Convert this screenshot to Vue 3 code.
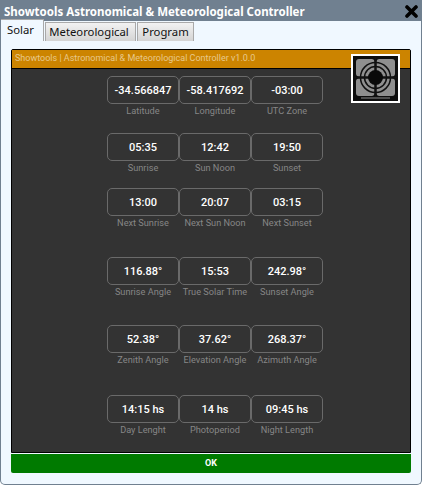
<script setup>
const rows = [
  { gap: 0, cells: [['-34.566847', 'Latitude'], ['-58.417692', 'Longitude'], ['-03:00', 'UTC Zone']] },
  { gap: 13, cells: [['05:35', 'Sunrise'], ['12:42', 'Sun Noon'], ['19:50', 'Sunset']] },
  { gap: 11, cells: [['13:00', 'Next Sunrise'], ['20:07', 'Next Sun Noon'], ['03:15', 'Next Sunset']] },
  { gap: 25, cells: [['116.88°', 'Sunrise Angle'], ['15:53', 'True Solar Time'], ['242.98°', 'Sunset Angle']] },
  { gap: 24, cells: [['52.38°', 'Zenith Angle'], ['37.62°', 'Elevation Angle'], ['268.37°', 'Azimuth Angle']] },
  { gap: 26, cells: [['14:15 hs', 'Day Lenght'], ['14 hs', 'Photoperiod'], ['09:45 hs', 'Night Length']] },
]
</script>

<template>
  <div class="window">
    <div class="titlebar">
      <span class="title">Showtools Astronomical &amp; Meteorological Controller</span>
      <svg class="close" width="13" height="13" viewBox="0 0 13 13">
        <path d="M2 2 L11 11 M11 2 L2 11" stroke="#000" stroke-width="3.6" stroke-linecap="round" />
      </svg>
    </div>
    <div class="tabs">
      <div class="tab active">Solar</div>
      <div class="tab meteo">Meteorological</div>
      <div class="tab program">Program</div>
    </div>
    <div class="body">
      <div class="panel">
        <div class="header">Showtools | Astronomical &amp; Meteorological Controller v1.0.0</div>
        <div class="logo">
          <svg width="45" height="45" viewBox="0 0 45 45">
            <rect width="45" height="45" fill="#0d0d0d" />
            <rect x="3" y="3" width="18.5" height="17.5" rx="3" fill="#8f8f8f" />
            <rect x="23.5" y="3" width="18.5" height="17.5" rx="3" fill="#8f8f8f" />
            <rect x="3" y="22.5" width="18.5" height="17.5" rx="3" fill="#8f8f8f" />
            <rect x="23.5" y="22.5" width="18.5" height="17.5" rx="3" fill="#8f8f8f" />
            <g fill="none" stroke="#111" stroke-width="1.5">
              <circle cx="22.5" cy="21.5" r="15" />
              <circle cx="22.5" cy="21.5" r="11" />
            </g>
            <path d="M22.5 1 V41 M1 21.5 H44" stroke="#111" stroke-width="2" />
            <circle cx="22.5" cy="21.5" r="7.5" fill="#0a0a0a" />
            <rect x="8" y="41.4" width="29" height="1.2" fill="#777" />
          </svg>
        </div>
        <div class="grid">
          <div v-for="(row, i) in rows" :key="i" class="row" :style="{ marginTop: row.gap + 'px' }">
            <div v-for="cell in row.cells" :key="cell[1]" class="cell">
              <div class="box">{{ cell[0] }}</div>
              <div class="label">{{ cell[1] }}</div>
            </div>
          </div>
        </div>
      </div>
      <div class="ok">OK</div>
    </div>
  </div>
</template>

<style>
html, body { margin: 0; background: #fff; }
</style>

<style scoped>
.window {
  width: 422px;
  height: 485px;
  box-sizing: border-box;
  background: #f0f8ff;
  border: 1px solid #708090;
  border-top: none;
  border-radius: 0 0 5px 5px;
  overflow: hidden;
  font-family: "Noto Sans", "Open Sans", sans-serif;
}
.titlebar {
  height: 21px;
  margin: 0 -1px;
  background: #708090;
  display: flex;
  align-items: center;
  justify-content: space-between;
  padding: 1px 4px 0 4px;
  box-sizing: border-box;
}
.title {
  color: #fff;
  font-size: 11.5px;
  font-weight: 700;
  white-space: nowrap;
}
.close { flex: none; }
.tabs {
  display: flex;
  align-items: flex-end;
  height: 21px;
  margin-top: -1px;
}
.tab {
  height: 19px;
  line-height: 18px;
  margin-left: 1px;
  box-sizing: border-box;
  font-size: 11.3px;
  color: #111;
  background: linear-gradient(#f2f2f2, #d4d4d4);
  border: 1px solid #a9a9a9;
  border-bottom: none;
  text-align: center;
}
.tab.meteo { width: 91px; padding-right: 3px; }
.tab.program { width: 57px; }
.tab.active {
  height: 22px;
  line-height: 20px;
  width: 44px;
  margin-left: -1px;
  padding-left: 6px;
  text-align: left;
  background: #f0f8ff;
}
.body {
  padding: 8px 10px 0;
}
.panel {
  position: relative;
  height: 404px;
  box-sizing: border-box;
  background: #333;
  border: 1px solid #000;
  border-radius: 2px 2px 0 0;
}
.header {
  height: 19px;
  line-height: 17px;
  background: #cc8400;
  border-bottom: 1px solid #000;
  box-sizing: border-box;
  padding-left: 3px;
  color: #e8c98c;
  font-family: Roboto, sans-serif;
  font-size: 9px;
}
.logo {
  position: absolute;
  left: 339px;
  top: 4px;
  width: 45px;
  height: 45px;
  border: 2px solid #fff;
  display: flex;
}
.grid {
  padding: 7px 0 0 95px;
}
.row {
  display: flex;
}
.cell {
  width: 72px;
  display: flex;
  flex-direction: column;
  align-items: center;
}
.box {
  width: 72px;
  height: 28px;
  box-sizing: border-box;
  border: 1px solid #6a6a6a;
  border-radius: 5px;
  text-align: center;
  line-height: 27px;
  color: #fff;
  font-family: Roboto, sans-serif;
  font-size: 11px;
  font-weight: 500;
}
.label {
  height: 16px;
  line-height: 14px;
  color: #868686;
  font-family: Roboto, sans-serif;
  font-size: 9.2px;
  white-space: nowrap;
}
.ok {
  margin-top: 1px;
  height: 19px;
  line-height: 18px;
  background: #007a00;
  border-radius: 0 0 2px 2px;
  color: #fff;
  text-align: center;
  font-family: Roboto, sans-serif;
  font-size: 9px;
  font-weight: 700;
}
</style>
